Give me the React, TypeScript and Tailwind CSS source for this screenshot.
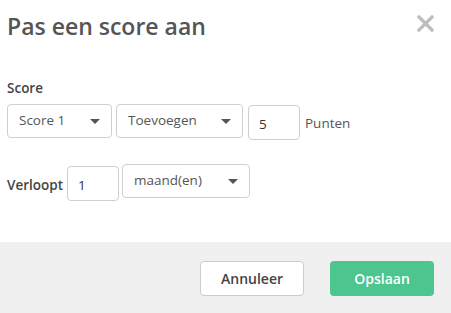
import { useState } from "react";

function Caret() {
  return (
    <svg width="10" height="5" viewBox="0 0 10 5" className="shrink-0">
      <path d="M0 0 L10 0 L5 5 Z" fill="#555" />
    </svg>
  );
}

function FakeSelect({ value, width }: { value: string; width: string }) {
  return (
    <div
      className={`flex h-[34px] ${width} items-center justify-between rounded-[4px] border border-solid border-[#cfcfcf] bg-white pl-[11px] pr-[11px] text-[13.5px] text-[#555]`}
    >
      <span className="-mt-[2px]">{value}</span>
      <Caret />
    </div>
  );
}

function NumberBox({ value, onChange }: { value: string; onChange: (v: string) => void }) {
  return (
    <input
      value={value}
      onChange={(e) => onChange(e.target.value)}
      className="h-[35px] w-[52px] rounded-[4px] border border-solid border-[#cfcfcf] bg-white px-[10px] pt-[2px] text-[13.5px] text-[#333] outline-none"
    />
  );
}

export default function App() {
  const [points, setPoints] = useState("5");
  const [expires, setExpires] = useState("1");

  return (
    <div
      className="flex h-[313px] w-[451px] flex-col bg-white text-[#555]"
      style={{ fontFamily: '"Open Sans", "Noto Sans", sans-serif' }}
    >
      <div className="flex items-start justify-between pl-[7px] pr-[17px] pt-[11px]">
        <h1 className="text-[23px] font-semibold leading-[30px] text-[#555]">Pas een score aan</h1>
        <button type="button" aria-label="Sluiten" className="mt-[4px]">
          <svg width="17" height="17" viewBox="0 0 17 17">
            <path d="M2 2 L15 15 M15 2 L2 15" stroke="#bdbdbd" strokeWidth="3.2" strokeLinecap="square" />
          </svg>
        </button>
      </div>

      <div className="px-[7px] pt-[37px]">
        <div className="text-[13.5px] font-semibold leading-[20px] text-[#444]">Score</div>
        <div className="mt-[6px] flex items-start gap-[4px]">
          <FakeSelect value="Score 1" width="w-[105px]" />
          <FakeSelect value="Toevoegen" width="w-[127px]" />
          <div className="ml-[1px] mt-[1px]">
            <NumberBox value={points} onChange={setPoints} />
          </div>
          <span className="ml-[1px] mt-[9px] text-[13.5px] leading-[20px]">Punten</span>
        </div>

        <div className="mt-[24px] flex items-start">
          <span className="mt-[11px] text-[13.5px] font-semibold leading-[20px] text-[#444]">Verloopt</span>
          <div className="ml-[4px] mt-[2px]">
            <NumberBox value={expires} onChange={setExpires} />
          </div>
          <div className="ml-[3px]">
            <FakeSelect value="maand(en)" width="w-[128px]" />
          </div>
        </div>
      </div>

      <div className="mt-auto flex h-[71px] items-center justify-end gap-[26px] bg-[#f0f0f0] pr-[17px] pt-[1px]">
        <button
          type="button"
          className="h-[35px] w-[104px] rounded-[4px] border border-solid border-[#cccccc] bg-white text-[14px] font-semibold text-[#444]"
        >
          Annuleer
        </button>
        <button
          type="button"
          className="h-[35px] w-[104px] rounded-[4px] bg-[#4cc68e] text-[14px] font-semibold text-white"
        >
          Opslaan
        </button>
      </div>
    </div>
  );
}
